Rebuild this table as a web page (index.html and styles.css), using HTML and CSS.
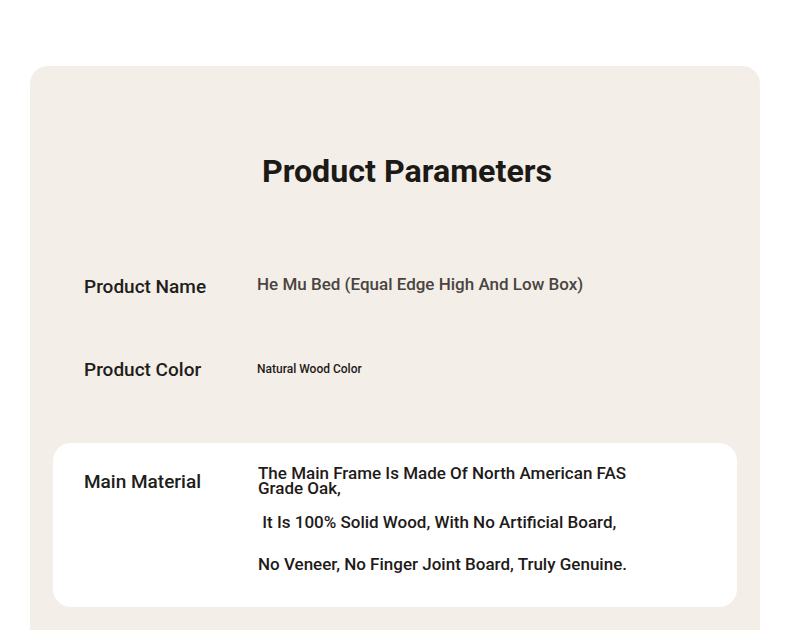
FILE: index.html
```html
<!DOCTYPE html>
<html>
<head>
<meta charset="utf-8">
<link rel="stylesheet" href="styles.css">
</head>
<body>
<section class="card">
  <h1 class="title">Product Parameters</h1>
  <div class="row row-name">
    <div class="label">Product Name</div>
    <div class="value value-name">He Mu Bed (Equal Edge High And Low Box)</div>
  </div>
  <div class="row row-color">
    <div class="label">Product Color</div>
    <div class="value value-small">Natural Wood Color</div>
  </div>
  <div class="row row-material">
    <div class="label label-material">Main Material</div>
    <div class="value value-material">
      <p class="m1">The Main Frame Is Made Of North American FAS Grade Oak,</p>
      <p class="m2">&nbsp;It Is 100% Solid Wood, With No Artificial Board,</p>
      <p class="m3">No Veneer, No Finger Joint Board, Truly Genuine.</p>
    </div>
  </div>
</section>
</body>
</html>
```
FILE: styles.css
```css
html, body {
  margin: 0;
  padding: 0;
  background: #ffffff;
  font-family: Roboto, "Liberation Sans", sans-serif;
}
body {
  height: 630px;
  overflow: hidden;
}
.card {
  margin: 66px 0 0 30px;
  width: 730px;
  height: 600px;
  background: #f4eee8;
  border-radius: 18px 18px 0 0;
  padding-top: 1px;
  box-sizing: border-box;
}
.title {
  margin: 84px 0 0 0;
  padding-left: 24px;
  text-align: center;
  font-size: 32.2px;
  font-weight: 700;
  line-height: 40px;
  color: #1c1a17;
}
.row {
  display: grid;
  grid-template-columns: 173px 1fr;
  padding-left: 54px;
}
.label {
  font-size: 19px;
  font-weight: 500;
  line-height: 24px;
  color: #201d1b;
}
.row-name {
  margin-top: 84px;
}
.value-name {
  font-size: 17px;
  font-weight: 500;
  line-height: 24px;
  color: #4a4440;
  margin-top: -3px;
}
.row-color {
  margin-top: 59px;
}
.value-small {
  font-size: 12px;
  font-weight: 500;
  font-stretch: 88%;
  line-height: 24px;
  color: #1e1b19;
  margin-top: -1px;
}
.row-material {
  margin: 61px 23px 0 23px;
  background: #ffffff;
  border-radius: 18px;
  padding: 27px 0 33px 31px;
  grid-template-columns: 174px 1fr;
}
.value-material {
  font-size: 17px;
  font-weight: 500;
  font-stretch: 95%;
  color: #1e1b19;
  width: 400px;
  margin-top: -4px;
}
.value-material p {
  margin: 0;
}
.m1 {
  line-height: 15px;
}
.m2 {
  line-height: 20px;
  margin-top: 16px !important;
}
.m3 {
  line-height: 20px;
  margin-top: 22px !important;
}
```
